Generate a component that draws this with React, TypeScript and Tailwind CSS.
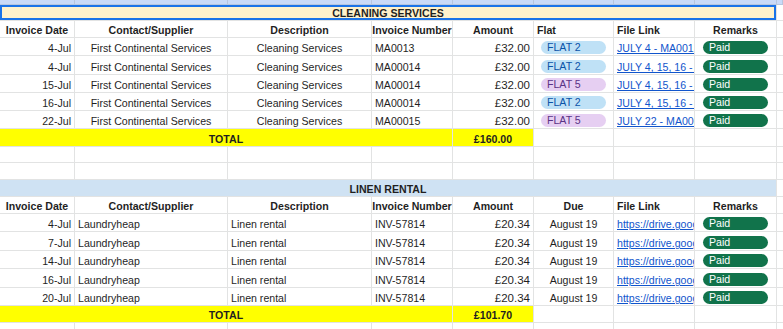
const grid =
  "grid grid-cols-[75px_153px_144px_81px_81px_80px_81px_82px_1fr]";

const cell =
  "flex items-end overflow-hidden whitespace-nowrap border-b border-r border-[#e2e3e3] px-[3px] pb-[1px] leading-none";

type Flat = "FLAT 2" | "FLAT 5";

const cleaning: { date: string; inv: string; flat: Flat; link: string; h: string }[] = [
  { date: "4-Jul", inv: "MA0013", flat: "FLAT 2", link: "JULY 4 - MA0013", h: "h-[18px]" },
  { date: "4-Jul", inv: "MA00014", flat: "FLAT 2", link: "JULY 4, 15, 16 - MA00014", h: "h-[19px]" },
  { date: "15-Jul", inv: "MA00014", flat: "FLAT 5", link: "JULY 4, 15, 16 - MA00014", h: "h-[18px]" },
  { date: "16-Jul", inv: "MA00014", flat: "FLAT 2", link: "JULY 4, 15, 16 - MA00014", h: "h-[18px]" },
  { date: "22-Jul", inv: "MA00015", flat: "FLAT 5", link: "JULY 22 - MA00015", h: "h-[18px]" },
];

const linen: { date: string; h: string }[] = [
  { date: "4-Jul", h: "h-[18px]" },
  { date: "7-Jul", h: "h-[19px]" },
  { date: "14-Jul", h: "h-[18px]" },
  { date: "16-Jul", h: "h-[19px]" },
  { date: "20-Jul", h: "h-[18px]" },
];

function FlatChip({ flat }: { flat: Flat }) {
  const tone =
    flat === "FLAT 2" ? "bg-[#bfe1f6] text-[#0a53a8]" : "bg-[#e6cff2] text-[#5a3286]";
  return (
    <div className={`${cell} items-center pb-0`}>
      <span className={`ml-[4px] flex h-[13px] w-[65px] items-center rounded-full px-[6px] ${tone}`}>
        {flat}
      </span>
    </div>
  );
}

function Paid() {
  return (
    <div className={`${cell} items-center pb-0`}>
      <span className="ml-[5px] flex h-[13px] w-[65px] items-center rounded-full bg-[#11734b] px-[6px] text-white">
        Paid
      </span>
    </div>
  );
}

function Link({ text }: { text: string }) {
  return (
    <div className={cell}>
      <span className="text-[#1155cc] underline">{text}</span>
    </div>
  );
}

function Empty() {
  return <div className={cell} />;
}

function Header({ due, h }: { due: boolean; h: string }) {
  return (
    <div className={`${grid} ${h} font-bold`}>
      <div className={`${cell} justify-center`}>Invoice Date</div>
      <div className={`${cell} justify-center`}>Contact/Supplier</div>
      <div className={`${cell} justify-center`}>Description</div>
      <div className={`${cell} justify-center px-0`}>Invoice Number</div>
      <div className={`${cell} justify-center`}>Amount</div>
      {due ? <div className={`${cell} justify-center`}>Due</div> : <div className={cell}>Flat</div>}
      <div className={cell}>File Link</div>
      <div className={`${cell} justify-center`}>Remarks</div>
      <Empty />
    </div>
  );
}

function Blank({ h }: { h: string }) {
  return (
    <div className={`${grid} ${h}`}>
      {Array.from({ length: 9 }).map((_, i) => (
        <Empty key={i} />
      ))}
    </div>
  );
}

function Total({ amount, h }: { amount: string; h: string }) {
  return (
    <div className={`${grid} ${h} font-bold`}>
      <div className={`${cell} col-span-4 justify-center bg-[#ffff00]`}>TOTAL</div>
      <div className={`${cell} justify-center bg-[#ffff00]`}>{amount}</div>
      <Empty />
      <Empty />
      <Empty />
      <Empty />
    </div>
  );
}

function Section({ title, h, selected }: { title: string; h: string; selected?: boolean }) {
  return (
    <div className={`${grid} ${h} font-bold`}>
      <div
        className={`${cell} col-span-8 justify-center ${
          selected ? "bg-[#fff2cc] shadow-[inset_0_0_0_2px_#1a73e8]" : "bg-[#cfe2f3]"
        }`}
      >
        {title}
      </div>
      <Empty />
    </div>
  );
}

export default function App() {
  return (
    <div className="h-[329px] w-[783px] overflow-hidden bg-white font-['Liberation_Sans',Arial,sans-serif] text-[10.6px] text-[#1f1f1f]">
      <div className={`${grid} h-[5px] bg-[#c9daf8]`}>
        {Array.from({ length: 9 }).map((_, i) => (
          <div key={i} className="border-b border-r border-[#b7c6df]" />
        ))}
      </div>

      <Section title="CLEANING SERVICES" h="h-[16px]" selected />
      <Header due={false} h="h-[17px]" />
      {cleaning.map((r, i) => (
        <div key={i} className={`${grid} ${r.h}`}>
          <div className={`${cell} justify-end`}>{r.date}</div>
          <div className={`${cell} justify-center`}>First Continental Services</div>
          <div className={`${cell} justify-center`}>Cleaning Services</div>
          <div className={cell}>{r.inv}</div>
          <div className={`${cell} justify-end text-[11.5px]`}>£32.00</div>
          <FlatChip flat={r.flat} />
          <Link text={r.link} />
          <Paid />
          <Empty />
        </div>
      ))}
      <Total amount="£160.00" h="h-[18px]" />
      <Blank h="h-[16px]" />
      <Blank h="h-[17px]" />

      <Section title="LINEN RENTAL" h="h-[17px]" />
      <Header due h="h-[17px]" />
      {linen.map((r, i) => (
        <div key={i} className={`${grid} ${r.h}`}>
          <div className={`${cell} justify-end`}>{r.date}</div>
          <div className={cell}>Laundryheap</div>
          <div className={cell}>Linen rental</div>
          <div className={cell}>INV-57814</div>
          <div className={`${cell} justify-end text-[11.5px]`}>£20.34</div>
          <div className={`${cell} justify-center`}>August 19</div>
          <Link text="https://drive.google.com/file/d/1" />
          <Paid />
          <Empty />
        </div>
      ))}
      <Total amount="£101.70" h="h-[17px]" />
      <Blank h="h-[17px]" />
    </div>
  );
}
